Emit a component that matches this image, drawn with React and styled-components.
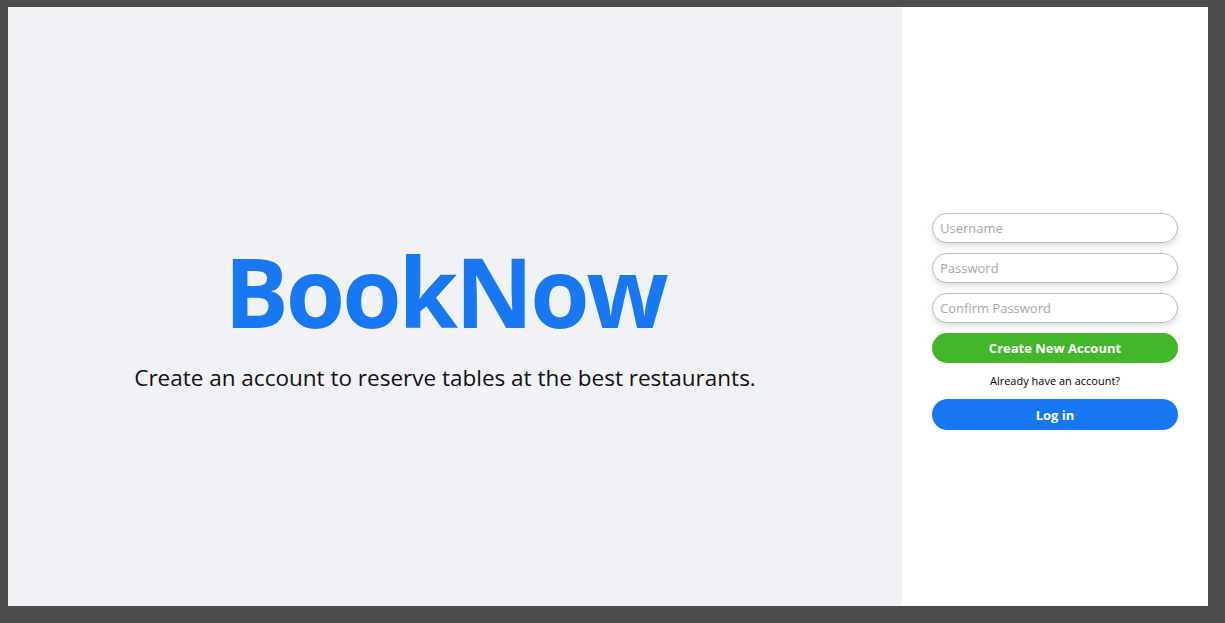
import React from "react";
import styled, { createGlobalStyle } from "styled-components";

const GlobalStyle = createGlobalStyle`
  html, body {
    margin: 0;
    padding: 0;
    background: #4c4c4c;
    font-family: "Open Sans", "Noto Sans", sans-serif;
  }
  * {
    box-sizing: border-box;
  }
`;

const Page = styled.div`
  display: flex;
  width: 1200px;
  height: 599px;
  margin: 7px 0 0 8px;
`;

const Hero = styled.section`
  flex: 1;
  background: #f0f2f5;
  display: flex;
  flex-direction: column;
  align-items: center;
  justify-content: center;
  padding: 21px 20px 0 0;
`;

const Logo = styled.h1`
  margin: 0;
  color: #1877f2;
  font-size: 96px;
  font-weight: 700;
  letter-spacing: -3px;
  line-height: 1;
`;

const Tagline = styled.p`
  margin: 25px 0 0;
  font-size: 22.5px;
  line-height: 1.2;
  color: #111;
`;

const Side = styled.aside`
  width: 306px;
  background: #fff;
  padding: 206px 30px 0;
`;

const Form = styled.form`
  display: flex;
  flex-direction: column;
  gap: 10px;
`;

const Input = styled.input`
  height: 30px;
  width: 100%;
  border: 1px solid #bdbdbd;
  border-radius: 15px;
  padding: 0 7px;
  font-family: inherit;
  font-size: 13px;
  color: #333;
  background: #fff;
  box-shadow: 0 3px 6px rgba(0, 0, 0, 0.14);
  outline: none;
  &::placeholder {
    color: #a8a8a8;
  }
`;

const Button = styled.button`
  height: ${(p) => p.$height || 30}px;
  width: 100%;
  border: none;
  border-radius: 16px;
  background: ${(p) => p.$color};
  color: #fff;
  font-family: inherit;
  font-size: 13px;
  font-weight: 700;
  cursor: pointer;
`;

const Note = styled.p`
  margin: 0;
  height: 16px;
  line-height: 16px;
  text-align: center;
  font-size: 11px;
  color: #000;
`;

export default function App() {
  return (
    <>
      <GlobalStyle />
      <Page>
        <Hero>
          <Logo>BookNow</Logo>
          <Tagline>Create an account to reserve tables at the best restaurants.</Tagline>
        </Hero>
        <Side>
          <Form onSubmit={(e) => e.preventDefault()}>
            <Input placeholder="Username" />
            <Input type="password" placeholder="Password" />
            <Input type="password" placeholder="Confirm Password" />
            <Button $color="#42b72a">Create New Account</Button>
            <Note>Already have an account?</Note>
            <Button type="button" $height={31} $color="#1877f2">Log in</Button>
          </Form>
        </Side>
      </Page>
    </>
  );
}
